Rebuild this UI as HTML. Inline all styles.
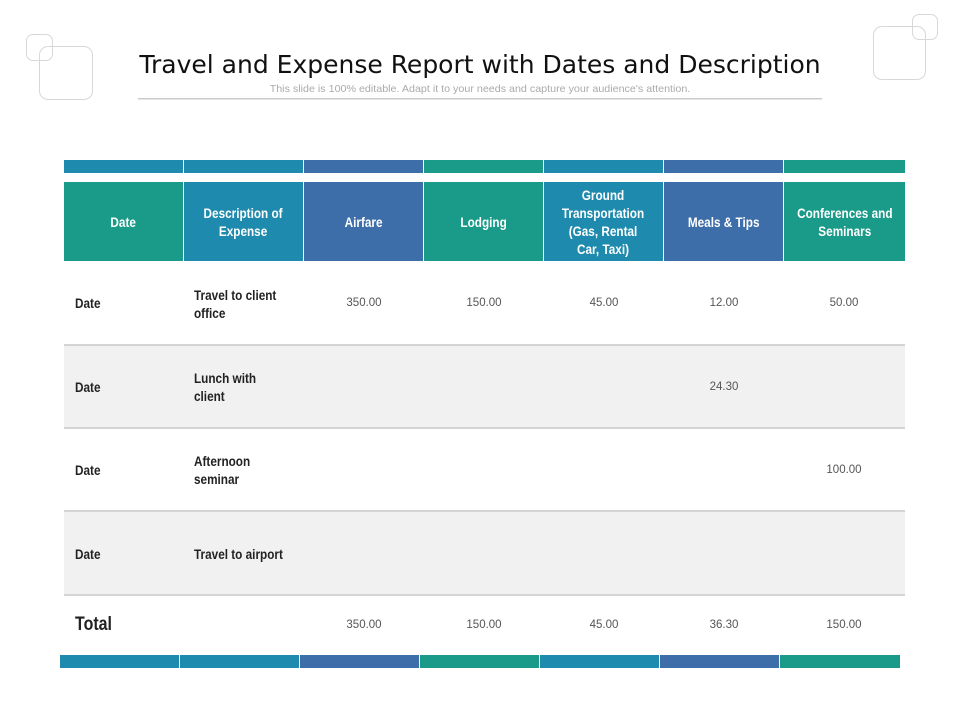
<!DOCTYPE html>
<html><head><meta charset="utf-8"><style>
*{margin:0;padding:0;box-sizing:border-box}
body{width:960px;height:720px;background:#fff;position:relative;overflow:hidden;font-family:"Liberation Sans",sans-serif}
.a{position:absolute}
.sq{position:absolute;border:1.5px solid #d8d8d8;border-radius:7px}
.title{left:0;width:960px;top:50px;text-align:center;font-family:"DejaVu Sans","Liberation Sans",sans-serif;font-size:25px;color:#111;letter-spacing:0px}
.sub{left:0;width:960px;top:83px;text-align:center;font-family:"Liberation Sans",sans-serif;font-size:10.5px;color:#aaa;transform:scaleX(1.02)}
.cell{position:absolute;display:flex;align-items:center;justify-content:center;text-align:center;color:#fff;font-weight:bold;font-size:14px;line-height:18px}
.cell span{display:inline-block;transform:scaleX(.84);white-space:nowrap}
.t{background:#1a9a88}.b{background:#1e8aad}.d{background:#3e6ea9}
.row{position:absolute;left:64px;width:841px;border-bottom:2px solid #d4d4d4}
.g{background:#f1f1f1}
.lbl{position:absolute;font-weight:bold;font-size:14px;color:#222;line-height:18px;transform:scaleX(.84);transform-origin:0 0;white-space:nowrap}
.num{position:absolute;width:120px;text-align:center;font-family:"Liberation Sans",sans-serif;font-size:11.5px;color:#555}
</style></head><body>
<div class="sq" style="left:26px;top:34px;width:27px;height:27px"></div>
<div class="sq" style="left:39px;top:46px;width:54px;height:54px;border-radius:9px"></div>
<div class="sq" style="left:873px;top:26px;width:53px;height:54px;border-radius:9px"></div>
<div class="sq" style="left:912px;top:14px;width:26px;height:26px"></div>
<div class="a title">Travel and Expense Report with Dates and Description</div>
<div class="a sub">This slide is 100% editable. Adapt it to your needs and capture your audience's attention.</div>
<div class="a" style="left:138px;top:98px;width:684px;height:2px;border-top:1px solid #ccc;border-bottom:1px solid #e4e4e4"></div>

<div class="cell b" style="left:64px;top:160px;width:119px;height:13px"></div>
<div class="cell b" style="left:184px;top:160px;width:119px;height:13px"></div>
<div class="cell d" style="left:304px;top:160px;width:119px;height:13px"></div>
<div class="cell t" style="left:424px;top:160px;width:119px;height:13px"></div>
<div class="cell b" style="left:544px;top:160px;width:119px;height:13px"></div>
<div class="cell d" style="left:664px;top:160px;width:119px;height:13px"></div>
<div class="cell t" style="left:784px;top:160px;width:121px;height:13px"></div>

<div class="cell t" style="left:64px;top:182px;width:119px;height:79px"><span>Date</span></div>
<div class="cell b" style="left:184px;top:182px;width:119px;height:79px"><span>Description of<br>Expense</span></div>
<div class="cell d" style="left:304px;top:182px;width:119px;height:79px"><span>Airfare</span></div>
<div class="cell t" style="left:424px;top:182px;width:119px;height:79px"><span>Lodging</span></div>
<div class="cell b" style="left:544px;top:182px;width:119px;height:79px"><span>Ground<br>Transportation<br>(Gas, Rental<br>Car, Taxi)</span></div>
<div class="cell d" style="left:664px;top:182px;width:119px;height:79px"><span>Meals &amp; Tips</span></div>
<div class="cell t" style="left:784px;top:182px;width:121px;height:79px"><span>Conferences and<br>Seminars</span></div>

<div class="row" style="top:261px;height:85px"></div>
<div class="row g" style="top:346px;height:83px"></div>
<div class="row" style="top:429px;height:83px"></div>
<div class="row g" style="top:512px;height:84px"></div>

<div class="lbl" style="left:75px;top:294px">Date</div>
<div class="lbl" style="left:194px;top:286px">Travel to client<br>office</div>
<div class="num" style="left:304px;top:297px">350.00</div>
<div class="num" style="left:424px;top:297px">150.00</div>
<div class="num" style="left:544px;top:297px">45.00</div>
<div class="num" style="left:664px;top:297px">12.00</div>
<div class="num" style="left:784px;top:297px">50.00</div>

<div class="lbl" style="left:75px;top:378px">Date</div>
<div class="lbl" style="left:194px;top:369px">Lunch with<br>client</div>
<div class="num" style="left:664px;top:381px">24.30</div>

<div class="lbl" style="left:75px;top:461px">Date</div>
<div class="lbl" style="left:194px;top:452px">Afternoon<br>seminar</div>
<div class="num" style="left:784px;top:464px">100.00</div>

<div class="lbl" style="left:75px;top:545px">Date</div>
<div class="lbl" style="left:194px;top:545px">Travel to airport</div>

<div class="lbl" style="left:75px;top:614px;font-size:19px;line-height:22px">Total</div>
<div class="num" style="left:304px;top:619px">350.00</div>
<div class="num" style="left:424px;top:619px">150.00</div>
<div class="num" style="left:544px;top:619px">45.00</div>
<div class="num" style="left:664px;top:619px">36.30</div>
<div class="num" style="left:784px;top:619px">150.00</div>

<div class="cell b" style="left:60px;top:655px;width:119px;height:13px"></div>
<div class="cell b" style="left:180px;top:655px;width:119px;height:13px"></div>
<div class="cell d" style="left:300px;top:655px;width:119px;height:13px"></div>
<div class="cell t" style="left:420px;top:655px;width:119px;height:13px"></div>
<div class="cell b" style="left:540px;top:655px;width:119px;height:13px"></div>
<div class="cell d" style="left:660px;top:655px;width:119px;height:13px"></div>
<div class="cell t" style="left:780px;top:655px;width:120px;height:13px"></div>
</body></html>
